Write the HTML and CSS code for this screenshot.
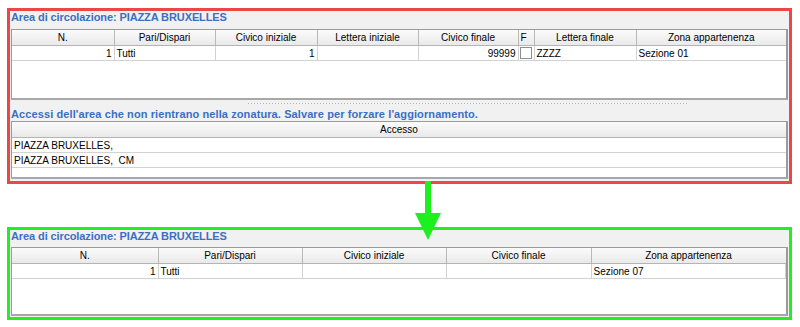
FILE: index.html
```html
<!DOCTYPE html>
<html lang="it">
<head>
<meta charset="utf-8">
<title>Area di circolazione</title>
<link rel="stylesheet" href="styles.css">
</head>
<body>
<div class="page">
  <section class="panel panel-red">
    <h2 class="panel-title">Area di circolazione: PIAZZA BRUXELLES</h2>
    <div class="grid grid-top">
      <table class="tbl">
        <colgroup>
          <col style="width:102px"><col style="width:101px"><col style="width:102px"><col style="width:101px"><col style="width:100px"><col style="width:16px"><col style="width:102px"><col>
        </colgroup>
        <thead>
          <tr><th>N.</th><th>Pari/Dispari</th><th>Civico iniziale</th><th>Lettera iniziale</th><th>Civico finale</th><th class="th-f">F</th><th>Lettera finale</th><th>Zona appartenenza</th></tr>
        </thead>
        <tbody>
          <tr><td class="num">1</td><td>Tutti</td><td class="num">1</td><td></td><td class="num">99999</td><td class="chk"><span class="checkbox"></span></td><td>ZZZZ</td><td>Sezione 01</td></tr>
        </tbody>
      </table>
    </div>
    <div class="splitter"></div>
    <h2 class="panel-title sub">Accessi dell'area che non rientrano nella zonatura. Salvare per forzare l'aggiornamento.</h2>
    <div class="grid grid-acc">
      <table class="tbl">
        <thead><tr><th>Accesso</th></tr></thead>
        <tbody>
          <tr><td>PIAZZA BRUXELLES,</td></tr>
          <tr><td>PIAZZA BRUXELLES,&nbsp; CM</td></tr>
        </tbody>
      </table>
    </div>
  </section>

  <div class="arrow" aria-hidden="true">
    <svg width="30" height="62" viewBox="0 0 30 62">
      <rect x="12" y="0" width="6" height="34" fill="#1ef01e"/>
      <polygon points="2,32 28,32 15,59" fill="#1ef01e"/>
    </svg>
  </div>

  <section class="panel panel-green">
    <h2 class="panel-title">Area di circolazione: PIAZZA BRUXELLES</h2>
    <div class="grid grid-bottom">
      <table class="tbl">
        <colgroup>
          <col style="width:146px"><col style="width:144px"><col style="width:144px"><col style="width:145px"><col>
        </colgroup>
        <thead>
          <tr><th>N.</th><th>Pari/Dispari</th><th>Civico iniziale</th><th>Civico finale</th><th>Zona appartenenza</th></tr>
        </thead>
        <tbody>
          <tr><td class="num">1</td><td>Tutti</td><td></td><td></td><td>Sezione 07</td></tr>
        </tbody>
      </table>
    </div>
  </section>
</div>
</body>
</html>
```

FILE: styles.css
```css
html, body {
  margin: 0;
  padding: 0;
  background: #ffffff;
}

.page {
  position: relative;
  width: 800px;
  height: 327px;
  padding-top: 8px;
  box-sizing: border-box;
  font-family: "Liberation Sans", Arial, sans-serif;
  font-size: 10px;
  color: #000;
}

.panel {
  width: 785px;
  margin-left: 7px;
  box-sizing: border-box;
  background: #f1f1f1;
  padding: 0 1px 0 1px;
  display: flex;
  flex-direction: column;
}

.panel-red {
  height: 176px;
  border: 3px solid #ec4646;
}

.panel-green {
  height: 93px;
  margin-top: 43px;
  border: 3px solid #22ee22;
}

.panel-title {
  margin: 0;
  height: 18px;
  line-height: 13px;
  font-size: 11px;
  font-weight: bold;
  color: #3b6fc4;
  white-space: nowrap;
  letter-spacing: -0.1px;
}

.panel-green .panel-title {
  height: 17px;
}

.panel-title.sub {
  height: 14px;
  line-height: 14px;
  letter-spacing: 0.1px;
}

.grid {
  width: 777px;
  box-sizing: border-box;
  background: #ffffff;
  border: 1px solid #9a9a9a;
  border-right-width: 2px;
  border-bottom-width: 2px;
  border-bottom-color: #a8a8a8;
}

.grid-top {
  height: 71px;
}

.grid-acc {
  height: 58px;
}

.grid-bottom {
  height: 69px;
}

.tbl {
  width: 100%;
  table-layout: fixed;
  border-collapse: collapse;
  font-size: 10px;
}

.tbl th {
  height: 15px;
  padding: 0;
  font-weight: normal;
  text-align: center;
  white-space: nowrap;
  overflow: hidden;
  background: linear-gradient(#fbfbfb, #e9e9e9);
  border-right: 1px solid #b9b9b9;
  border-bottom: 1px solid #b4b4b4;
  line-height: 14px;
}

.tbl th:last-child {
  border-right: none;
}

.tbl th.th-f {
  text-align: left;
  padding-left: 2px;
}

.tbl td {
  height: 14px;
  padding: 0 2px;
  white-space: nowrap;
  overflow: hidden;
  border-right: 1px solid #d2d2d2;
  border-bottom: 1px solid #d2d2d2;
  line-height: 13px;
}

.tbl td:last-child {
  border-right: none;
}

.tbl td.num {
  text-align: right;
}

.tbl td.chk {
  padding: 0 1px;
}

.checkbox {
  display: block;
  width: 10px;
  height: 10px;
  border: 1px solid #8e8e8e;
  background: #fff;
}

.grid-bottom .tbl td:last-child {
  border-right: 1px solid #d2d2d2;
}

.splitter {
  height: 7px;
  margin-left: 236px;
  width: 441px;
  background-image: radial-gradient(circle, #b5b5b5 0.6px, transparent 0.9px);
  background-size: 3px 3px;
  background-repeat: repeat-x;
  background-position: 0 2px;
}

.arrow {
  position: absolute;
  left: 413px;
  top: 181px;
  width: 30px;
  height: 62px;
}

.arrow svg {
  display: block;
}
```
